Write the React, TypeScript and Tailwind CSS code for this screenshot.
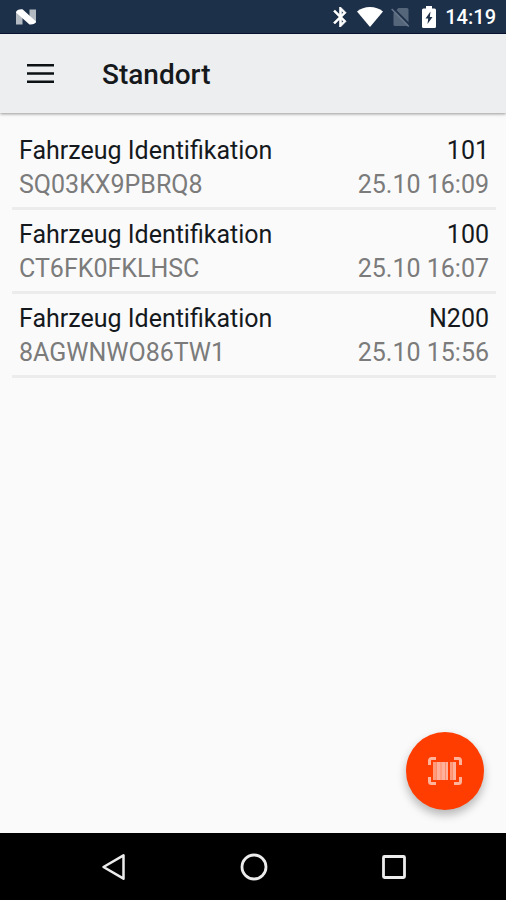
const font = "font-['Roboto','Liberation_Sans',sans-serif]";

type Scan = {
  id: string;
  label: string;
  code: string;
  vehicle: string;
  date: string;
}

const scans: Scan[] = [
  { id: '1', label: 'Fahrzeug Identifikation', code: 'SQ03KX9PBRQ8', vehicle: '101', date: '25.10 16:09' },
  { id: '2', label: 'Fahrzeug Identifikation', code: 'CT6FK0FKLHSC', vehicle: '100', date: '25.10 16:07' },
  { id: '3', label: 'Fahrzeug Identifikation', code: '8AGWNWO86TW1', vehicle: 'N200', date: '25.10 15:56' },
];

function StatusBar() {
  return (
    <div className="flex h-[34px] shrink-0 items-center border-b border-[#0b1236] bg-[#1d3049] pt-px pl-4 pr-[10px] text-white">
      <svg className="h-4 w-5" viewBox="0 0 20 16" aria-hidden="true">
        <path d="M0 2.500L6.500 4v11.500H0z" fill="#b4bac1" />
        <path d="M13.500 0.500H20V14l-6.500-2z" fill="#b4bac1" />
        <path d="M0 3.500C0.500 1 3 0 6.500 0.300L20 12.500c-0.500 2.300-3 3.300-6.500 3z" fill="#fff" />
      </svg>
      <div className="ml-auto flex items-center">
        <svg className="h-5 w-[14px]" viewBox="5 2 13 20" fill="currentColor" stroke="currentColor" strokeWidth="0.600" aria-hidden="true">
          <path d="M17.710 7.710L12 2h-1v7.590L6.410 5 5 6.410 10.590 12 5 17.590 6.410 19 11 14.410V22h1l5.710-5.710-4.300-4.290 4.300-4.290zM13 5.830l1.880 1.880L13 9.590V5.830zm1.880 10.460L13 18.170v-3.760l1.880 1.880z" />
        </svg>
        <svg className="ml-[10px] h-5 w-[26px]" viewBox="0 0 26 20" fill="currentColor" aria-hidden="true">
          <path d="M13 20L0 4.500C3.500 1.500 8 0 13 0s9.500 1.500 13 4.500z" />
        </svg>
        <svg className="ml-2 h-5 w-[19px]" viewBox="0 0 19 20" aria-hidden="true">
          <path d="M7.500 1H16a1.500 1.500 0 0 1 1.500 1.500v15A1.500 1.500 0 0 1 16 19H4a1.500 1.500 0 0 1-1.500-1.500V6z" fill="#56667a" />
          <path d="M2 1L19 18" stroke="#1d3049" strokeWidth="1.800" />
          <path d="M0.700 2L17.700 19.500" stroke="#66758a" strokeWidth="1.600" />
        </svg>
        <svg className="ml-3 h-[22px] w-[14px]" viewBox="0 0 14 22" aria-hidden="true">
          <path d="M4 0h6v2.500h2.500A1.500 1.500 0 0 1 14 4v16.500a1.500 1.500 0 0 1-1.500 1.500h-11A1.500 1.500 0 0 1 0 20.500V4a1.500 1.500 0 0 1 1.500-1.500H4z" fill="#fff" />
          <path d="M8.500 5.500L3.500 12.500H6.200L5.500 18l5-7H7.800z" fill="#1d3049" />
        </svg>
        <span className="ml-[9px] text-xl leading-8 font-medium">14:19</span>
      </div>
    </div>
  );
}

function Header() {
  return (
    <header className="z-10 flex h-[79px] shrink-0 items-center bg-[#edeef0] pl-[27px] shadow-[0_1px_3px_rgba(0,0,0,0.4)]">
      <button type="button" aria-label="Menü" className="flex h-10 w-[75px] items-center">
        <svg className="h-5 w-[27px]" viewBox="0 0 27 20" fill="#0d1012" aria-hidden="true">
          <path d="M0 0h27v2.500H0zM0 8.200h27v2.500H0zM0 16.400h27v2.500H0z" />
        </svg>
      </button>
      <h1 className="pt-[3px] text-[28px] leading-8 font-medium text-[#16191c]">Standort</h1>
    </header>
  );
}

function ScanRow({ scan }: { scan: Scan }) {
  return (
    <li className="flex justify-between border-b-3 border-[#ececec] px-[7px] pt-2 pb-[5px] text-[25px] leading-[34px]">
      <div>
        <p className="text-[#15191d]">{scan.label}</p>
        <p className="text-[#7b7b7b]">{scan.code}</p>
      </div>
      <div className="text-right">
        <p className="text-[#15191d]">{scan.vehicle}</p>
        <p className="text-[#7b7b7b]">{scan.date}</p>
      </div>
    </li>
  );
}

function ScanButton() {
  return (
    <button
      type="button"
      aria-label="Barcode scannen"
      className="absolute right-[22px] bottom-[23px] flex size-[78px] items-center justify-center rounded-full bg-[#ff3d00] shadow-[0_5px_10px_rgba(0,0,0,0.28)]"
    >
      <svg className="h-7 w-[34px]" viewBox="0 0 34 28" aria-hidden="true">
        <path
          d="M1.500 8V3.500a2 2 0 0 1 2-2H8M26 1.500h4.500a2 2 0 0 1 2 2V8M32.500 20v4.500a2 2 0 0 1-2 2H26M8 26.500H3.500a2 2 0 0 1-2-2V20"
          fill="none"
          stroke="#ffb39b"
          strokeWidth="3"
        />
        <path d="M5 5h3v18H5zM22 5h2v18h-2z" fill="#ff9b7b" />
        <path d="M9 5h11v18H9zM25 5h3v18h-3z" fill="#ffb09a" />
        <path d="M12.500 5h1v18h-1zM17 5h1v18h-1zM24 5h1v18h-1zM8 5h1v18H8z" fill="#ff8c69" />
      </svg>
    </button>
  );
}

function NavBar() {
  return (
    <nav className="flex h-[67px] shrink-0 items-center justify-around bg-black pr-[42px] pl-11 text-[#ececec]">
      <button type="button" aria-label="Zurück" className="flex h-12 w-16 items-center justify-center">
        <svg className="size-7" viewBox="0 0 28 28" fill="none" stroke="currentColor" strokeWidth="2.500" strokeLinejoin="round" aria-hidden="true">
          <path d="M3.500 14L23.500 2.300v23.400z" />
        </svg>
      </button>
      <button type="button" aria-label="Startseite" className="flex h-12 w-16 items-center justify-center">
        <svg className="size-7" viewBox="0 0 28 28" fill="none" stroke="currentColor" strokeWidth="2.800" aria-hidden="true">
          <circle cx="14" cy="14" r="12" />
        </svg>
      </button>
      <button type="button" aria-label="Übersicht" className="flex h-12 w-16 items-center justify-center">
        <svg className="size-7" viewBox="0 0 28 28" fill="none" stroke="currentColor" strokeWidth="2.800" aria-hidden="true">
          <rect x="3.500" y="3.500" width="21" height="21" rx="1" />
        </svg>
      </button>
    </nav>
  );
}

export default function App() {
  return (
    <div className={`flex min-h-screen flex-col bg-[#fafafa] ${font}`}>
      <StatusBar />
      <Header />
      <main className="relative flex-1">
        <ul className="pt-[13px] pr-[10px] pl-3">
          {scans.map((scan) => <ScanRow key={scan.id} scan={scan} />)}
        </ul>
        <ScanButton />
      </main>
      <NavBar />
    </div>
  );
}
